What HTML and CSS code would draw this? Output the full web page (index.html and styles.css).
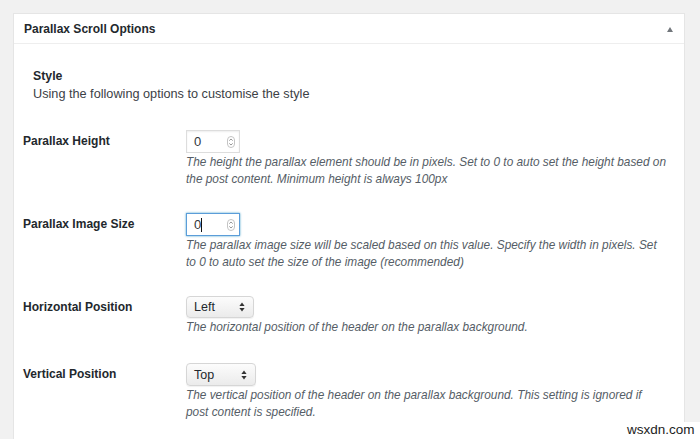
FILE: index.html
```html
<!DOCTYPE html>
<html>
<head>
<meta charset="utf-8">
<title>Parallax Scroll Options</title>
<link rel="stylesheet" href="styles.css">
</head>
<body>
<div class="panel">
  <div class="panel-head">
    <h2 class="panel-title">Parallax Scroll Options</h2>
    <span class="toggle-arrow"></span>
  </div>
  <div class="panel-body">
    <div class="section-intro">
      <h3 class="section-title">Style</h3>
      <p class="section-text">Using the following options to customise the style</p>
    </div>
    <div class="form-rows">
      <div class="form-row">
        <div class="label">Parallax Height</div>
        <div class="field">
          <div class="num-input"><span class="num-value">0</span>
            <svg class="spinner" width="8" height="12" viewBox="0 0 8 12"><rect x="0.5" y="0.5" width="7" height="11" rx="3.5" fill="none" stroke="#c4c4c4"/><path d="M2.3 4.6 L4 3 L5.7 4.6" fill="none" stroke="#8a8a8a" stroke-width="0.9"/><path d="M2.3 7.4 L4 9 L5.7 7.4" fill="none" stroke="#8a8a8a" stroke-width="0.9"/></svg>
          </div>
          <p class="desc">The height the parallax element should be in pixels. Set to 0 to auto set the height based on<br>the post content. Minimum height is always 100px</p>
        </div>
      </div>
      <div class="form-row">
        <div class="label">Parallax Image Size</div>
        <div class="field">
          <div class="num-input focused"><span class="num-value">0</span><span class="caret"></span>
            <svg class="spinner" width="8" height="12" viewBox="0 0 8 12"><rect x="0.5" y="0.5" width="7" height="11" rx="3.5" fill="none" stroke="#c4c4c4"/><path d="M2.3 4.6 L4 3 L5.7 4.6" fill="none" stroke="#8a8a8a" stroke-width="0.9"/><path d="M2.3 7.4 L4 9 L5.7 7.4" fill="none" stroke="#8a8a8a" stroke-width="0.9"/></svg>
          </div>
          <p class="desc">The parallax image size will be scaled based on this value. Specify the width in pixels. Set<br>to 0 to auto set the size of the image (recommended)</p>
        </div>
      </div>
      <div class="form-row">
        <div class="label">Horizontal Position</div>
        <div class="field">
          <div class="select select-left"><span>Left</span>
            <svg class="sel-arrows" width="6" height="10" viewBox="0 0 6 10"><path d="M3 0.5 L5.6 4 L0.4 4 Z" fill="#333"/><path d="M3 9.5 L5.6 6 L0.4 6 Z" fill="#333"/></svg>
          </div>
          <p class="desc">The horizontal position of the header on the parallax background.</p>
        </div>
      </div>
      <div class="form-row last">
        <div class="label">Vertical Position</div>
        <div class="field">
          <div class="select select-top"><span>Top</span>
            <svg class="sel-arrows" width="6" height="10" viewBox="0 0 6 10"><path d="M3 0.5 L5.6 4 L0.4 4 Z" fill="#333"/><path d="M3 9.5 L5.6 6 L0.4 6 Z" fill="#333"/></svg>
          </div>
          <p class="desc">The vertical position of the header on the parallax background. This setting is ignored if<br>post content is specified.</p>
        </div>
      </div>
    </div>
  </div>
</div>
<div class="watermark">wsxdn.com</div>
</body>
</html>
```
FILE: styles.css
```css
html, body {
  margin: 0;
  padding: 0;
}
body {
  background: #f1f1f1;
  font-family: "Liberation Sans", Arial, Helvetica, sans-serif;
  color: #23282d;
  height: 439px;
  overflow: hidden;
  position: relative;
}
.panel {
  margin: 13px 15px 0 13px;
  background: #fff;
  border: 1px solid #e5e5e5;
  border-bottom: none;
  height: 426px;
  box-sizing: border-box;
  overflow: hidden;
}
.panel-head {
  height: 29px;
  border-bottom: 1px solid #eeeeee;
  display: flex;
  align-items: center;
  justify-content: space-between;
  padding: 0 11px 0 10px;
}
.panel-title {
  margin: 0;
  font-size: 12px;
  font-weight: bold;
  color: #23282d;
  line-height: 1;
}
.toggle-arrow {
  width: 0;
  height: 0;
  border-left: 3.5px solid transparent;
  border-right: 3.5px solid transparent;
  border-bottom: 5px solid #72777c;
  margin-top: 1px;
}
.panel-body {
  padding: 23px 0 0 0;
}
.section-intro {
  padding-left: 19px;
}
.section-title {
  margin: 0;
  font-size: 12.3px;
  font-weight: bold;
  line-height: 18px;
  color: #23282d;
}
.section-text {
  margin: 0;
  font-size: 12.7px;
  line-height: 18px;
  color: #3c4146;
}
.form-rows {
  display: flex;
  flex-direction: column;
  gap: 25px;
  padding-top: 27px;
}
.form-row {
  display: grid;
  grid-template-columns: 172px 1fr;
}
.form-row.last {
  margin-top: 2px;
}
.label {
  padding-left: 9px;
  font-size: 12px;
  font-weight: bold;
  line-height: 23px;
  color: #23282d;
}
.field {
  display: flex;
  flex-direction: column;
  align-items: flex-start;
}
.num-input {
  box-sizing: border-box;
  width: 54px;
  height: 23px;
  border: 1px solid #dddddd;
  box-shadow: inset 0 1px 2px rgba(0,0,0,0.07);
  background: #fff;
  display: flex;
  align-items: center;
  padding-left: 7px;
  padding-right: 4px;
  font-size: 13px;
  color: #32373c;
}
.num-input.focused {
  border-color: #5b9dd9;
  box-shadow: 0 0 2px rgba(30,140,190,0.8);
}
.num-value {
  line-height: 1;
}
.caret {
  width: 1px;
  height: 14px;
  background: #111;
}
.spinner {
  margin-left: auto;
}
.select {
  box-sizing: border-box;
  height: 22px;
  border: 1px solid #d6d6d6;
  border-radius: 4px;
  background: linear-gradient(#fcfcfc, #ebebeb);
  box-shadow: 0 1px 1px rgba(0,0,0,0.06);
  display: flex;
  align-items: center;
  justify-content: space-between;
  padding: 0 8px 0 7px;
  font-size: 12.5px;
  color: #23282d;
}
.select-left {
  width: 68px;
}
.select-top {
  width: 70px;
  height: 23px;
}
.desc {
  margin: 1px 0 0 0;
  font-size: 11.85px;
  font-style: italic;
  line-height: 17px;
  color: #555d66;
  white-space: nowrap;
}
.watermark {
  position: absolute;
  right: 0;
  bottom: 0;
  width: 75px;
  height: 17px;
  background: #fff;
  font-size: 13.5px;
  line-height: 16px;
  color: #222;
  padding-left: 2px;
  box-sizing: border-box;
}
```
